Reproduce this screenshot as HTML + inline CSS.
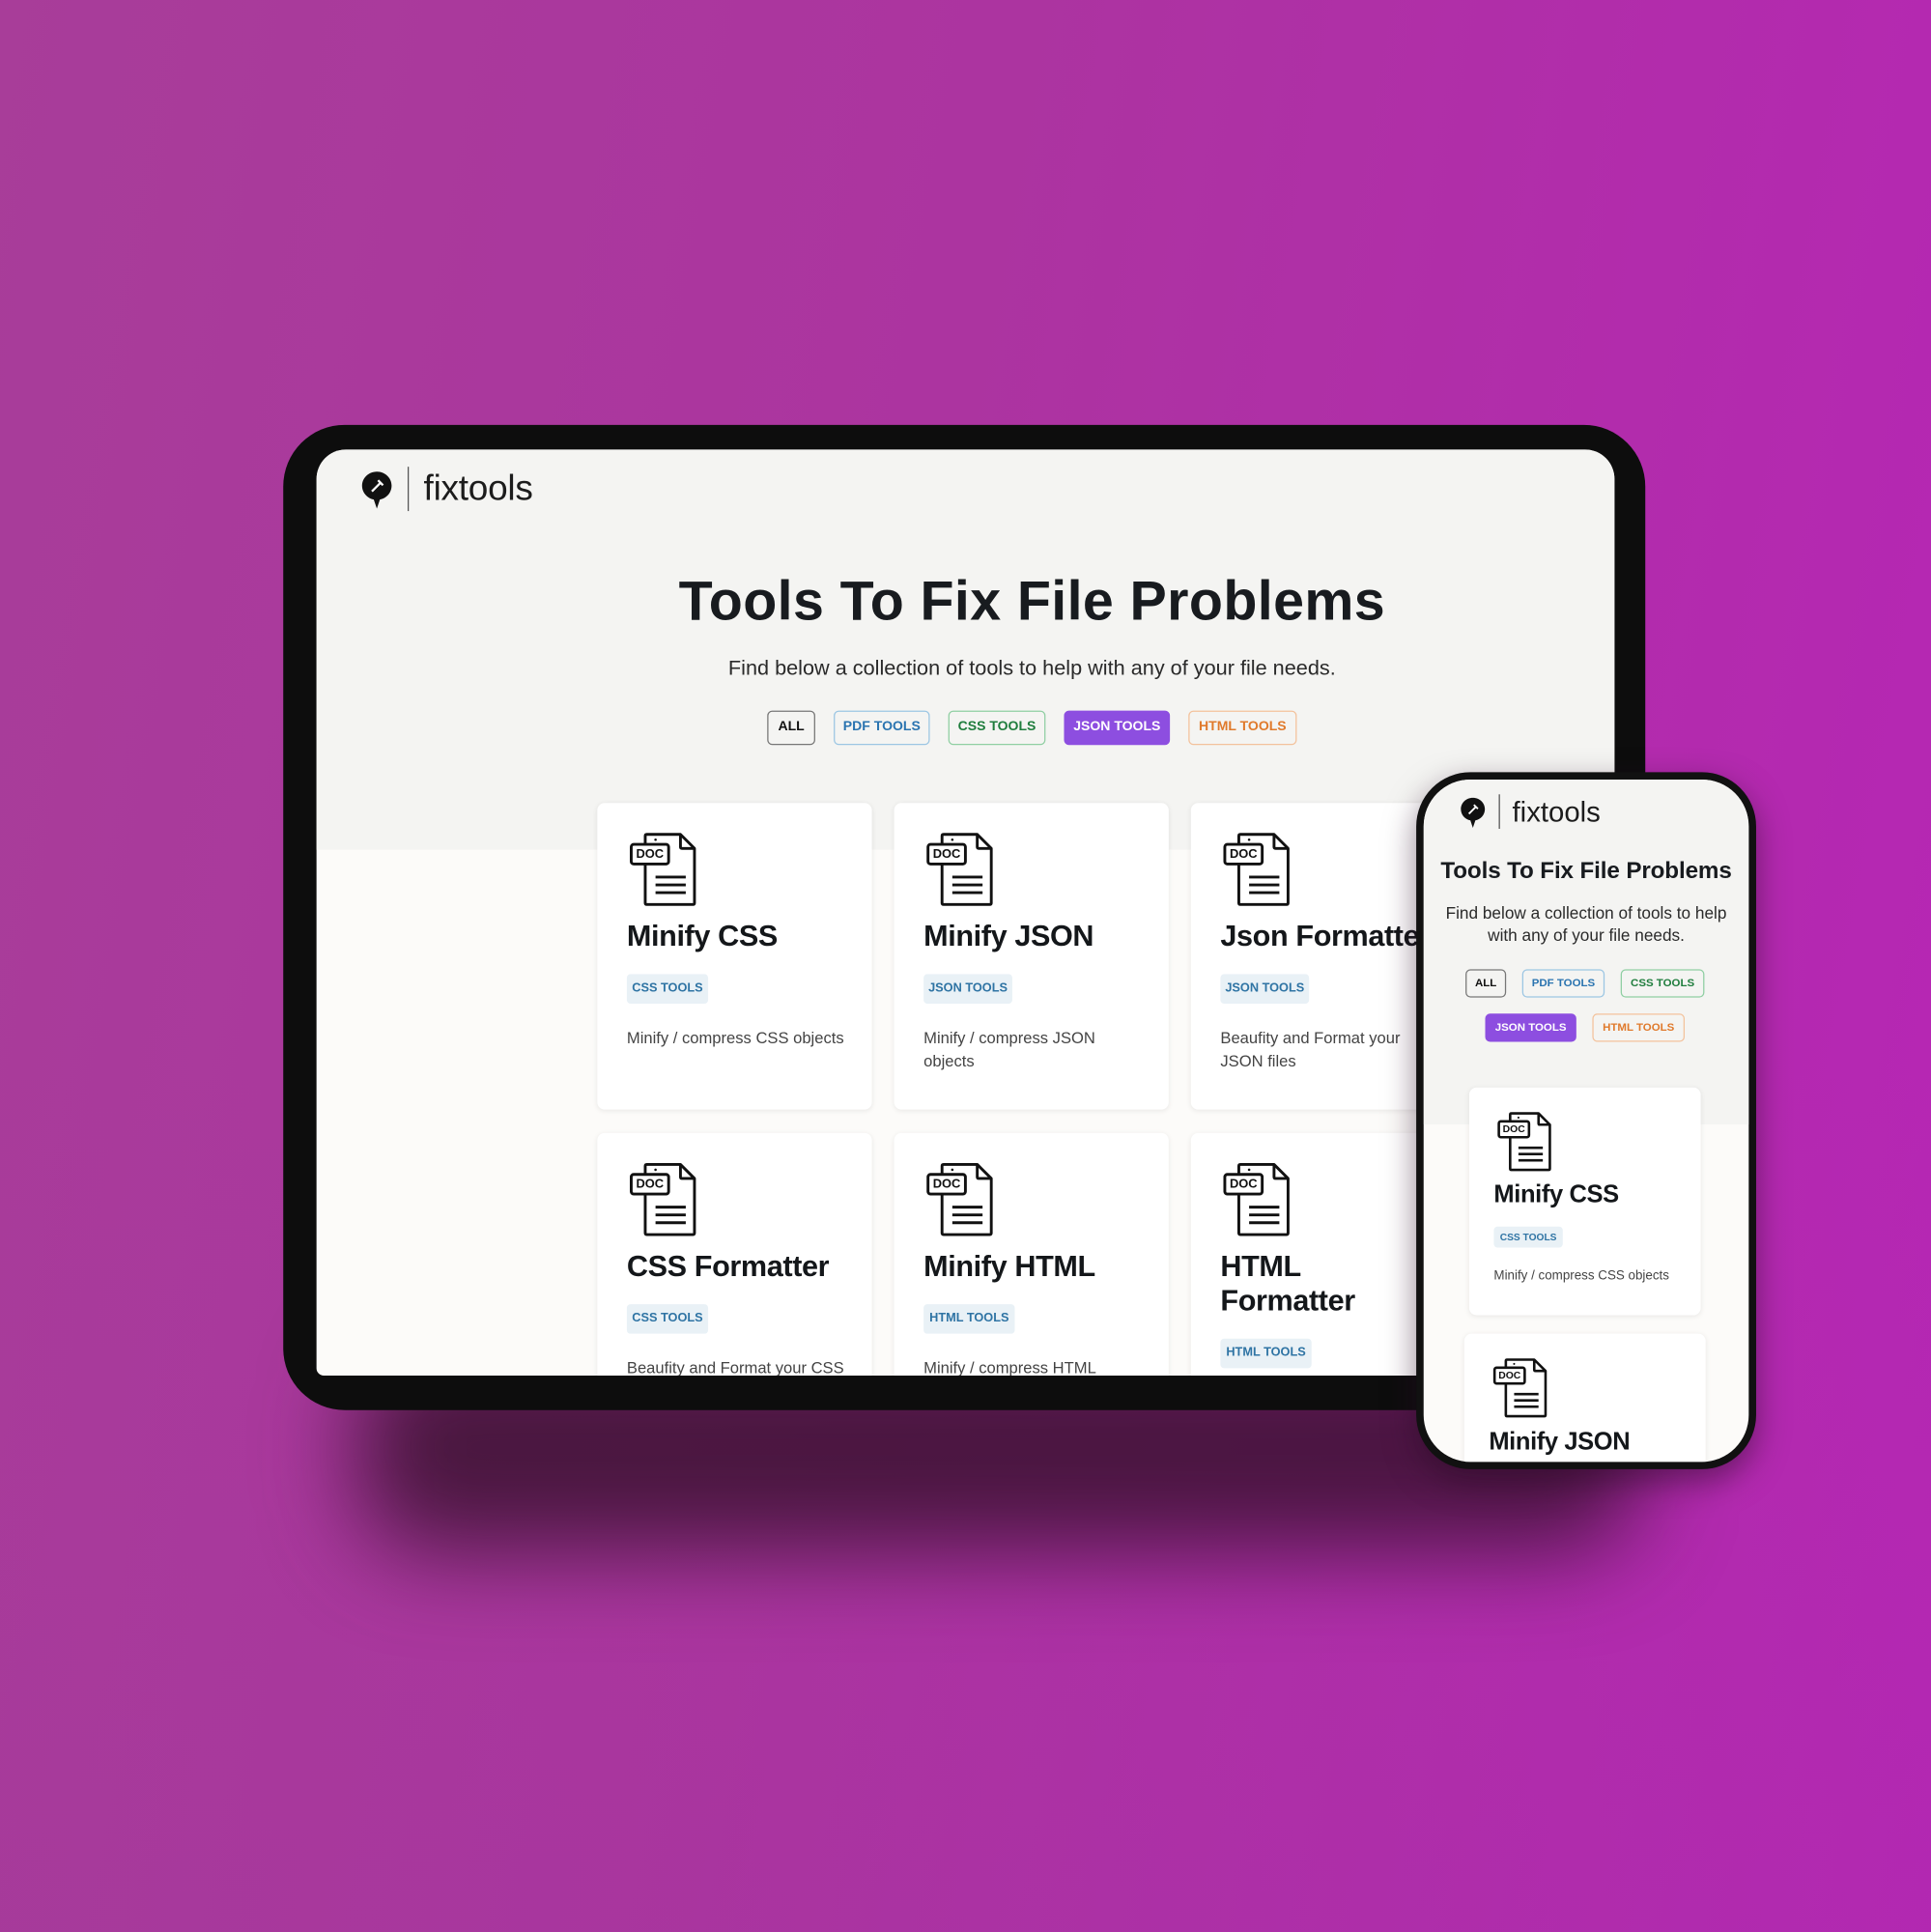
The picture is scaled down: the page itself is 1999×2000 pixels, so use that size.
<!DOCTYPE html>
<html><head><meta charset="utf-8"><style>
*{margin:0;padding:0;box-sizing:border-box}
html,body{width:1999px;height:2000px;overflow:hidden}
body{background:linear-gradient(100deg,#a83d99 0%,#ac34a0 45%,#b725b6 100%);font-family:"Liberation Sans",sans-serif;position:relative}
.bgb{position:absolute;left:0;top:0;width:1999px;height:2000px;background:linear-gradient(180deg,rgba(0,0,0,0) 55%,rgba(150,60,150,0.15) 100%)}
#st{position:absolute;left:0;top:0;width:1568px;height:1569px;transform:scale(1.27487);transform-origin:0 0}
.abs{position:absolute}
.shadow{position:absolute;left:290px;top:1090px;width:1040px;height:170px;background:rgba(50,15,40,0.8);filter:blur(38px);border-radius:60px}
.tab{left:230px;top:345px;width:1106px;height:800px;background:#0d0d0d;border-radius:50px}
.scr{left:257px;top:365px;width:1054px;height:752px;background:#fcfbf9;border-radius:24px 24px 0 6px;overflow:hidden}
.top{position:absolute;left:0;top:0;width:100%;height:325px;background:#f4f4f2}
.card{position:absolute;background:#fff;border-radius:6px;box-shadow:0 1px 4px rgba(0,0,0,0.08)}
.ct{position:absolute;font-weight:bold;color:#14171a;letter-spacing:-0.3px}
.tag{position:absolute;background:#e9f1f6;color:#2f74a4;font-weight:bold;border-radius:3px;text-align:center}
.desc{position:absolute;color:#444;line-height:1.45}
.btn{position:absolute;border-radius:4px;font-weight:bold;text-align:center;border:1.5px solid}
svg{position:absolute;overflow:visible}
</style></head><body><div class="bgb"></div>
<div id="st">
<div class="shadow"></div>
<div class="abs tab"></div>
<div class="abs scr">
 <div class="top"></div>
 <svg style="left:36px;top:17px" width="26" height="32" viewBox="0 0 26 32"><path d="M13 1C6.4 1 1 6 1 12.4c0 5.8 4.4 10.3 9.5 11.2L13 31l2.5-7.4C20.6 22.7 25 18.2 25 12.4 25 6 19.6 1 13 1z" fill="#111"/><path d="M9 17l7-7M14 8l4 4" stroke="#fff" stroke-width="1.8" fill="none"/></svg>
 <div class="abs" style="left:74px;top:14px;width:1px;height:36px;background:#555"></div>
 <div class="abs" style="left:87px;top:16px;font-size:29px;color:#1c1c1c;letter-spacing:-0.2px">fixtools</div>
 <div class="abs" style="left:0;width:1162px;text-align:center;top:97px;font-size:45px;font-weight:bold;color:#181b1f;letter-spacing:0.3px">Tools To Fix File Problems</div>
 <div class="abs" style="left:0;width:1162px;text-align:center;top:168px;font-size:17px;color:#2a2a2a">Find below a collection of tools to help with any of your file needs.</div>
 <div class="btn" style="left:366px;top:212px;width:39px;height:28px;line-height:25px;font-size:11px;color:#111;border-color:#777">ALL</div>
 <div class="btn" style="left:420px;top:212px;width:78px;height:28px;line-height:25px;font-size:11px;color:#2a74b0;border-color:#9cc6e3">PDF TOOLS</div>
 <div class="btn" style="left:513px;top:212px;width:79px;height:28px;line-height:25px;font-size:11px;color:#1f7d3d;border-color:#90cfa3">CSS TOOLS</div>
 <div class="btn" style="left:607px;top:212px;width:86px;height:28px;line-height:25px;font-size:11px;color:#fff;background:#8d4ee0;border-color:#8d4ee0">JSON TOOLS</div>
 <div class="btn" style="left:708px;top:212px;width:88px;height:28px;line-height:25px;font-size:11px;color:#e07a2c;border-color:#f3c29c">HTML TOOLS</div>
 <div class="card" style="left:228px;top:287px;width:223px;height:249px"></div>
 <div class="card" style="left:469px;top:287px;width:223px;height:249px"></div>
 <div class="card" style="left:710px;top:287px;width:223px;height:249px"></div>
 <div class="card" style="left:228px;top:555px;width:223px;height:249px"></div>
 <div class="card" style="left:469px;top:555px;width:223px;height:249px"></div>
 <div class="card" style="left:710px;top:555px;width:223px;height:249px"></div>
</div>
<div class="abs" style="left:257px;top:365px;width:1054px;height:752px;overflow:hidden">
 <svg style="left:253px;top:310px" width="57" height="62" viewBox="60 15 225 245"><g fill="none" stroke="#111" stroke-width="9" stroke-linejoin="round"><path d="M115 55V30q0-5 5-5h108l45 45v175q0 5-5 5H120q-5 0-5-5V120"/><path d="M228 25v40q0 5 5 5h40"/><rect x="70" y="57" width="120" height="63" rx="8"/><path d="M148 162h97M148 187h97M148 212h97"/></g><text x="130" y="100" text-anchor="middle" font-family="Liberation Sans" font-weight="bold" font-size="40" fill="#111">DOC</text><circle cx="148" cy="42" r="4" fill="#111"/></svg>
 <svg style="left:494px;top:310px" width="57" height="62" viewBox="60 15 225 245"><g fill="none" stroke="#111" stroke-width="9" stroke-linejoin="round"><path d="M115 55V30q0-5 5-5h108l45 45v175q0 5-5 5H120q-5 0-5-5V120"/><path d="M228 25v40q0 5 5 5h40"/><rect x="70" y="57" width="120" height="63" rx="8"/><path d="M148 162h97M148 187h97M148 212h97"/></g><text x="130" y="100" text-anchor="middle" font-family="Liberation Sans" font-weight="bold" font-size="40" fill="#111">DOC</text><circle cx="148" cy="42" r="4" fill="#111"/></svg>
 <svg style="left:735px;top:310px" width="57" height="62" viewBox="60 15 225 245"><g fill="none" stroke="#111" stroke-width="9" stroke-linejoin="round"><path d="M115 55V30q0-5 5-5h108l45 45v175q0 5-5 5H120q-5 0-5-5V120"/><path d="M228 25v40q0 5 5 5h40"/><rect x="70" y="57" width="120" height="63" rx="8"/><path d="M148 162h97M148 187h97M148 212h97"/></g><text x="130" y="100" text-anchor="middle" font-family="Liberation Sans" font-weight="bold" font-size="40" fill="#111">DOC</text><circle cx="148" cy="42" r="4" fill="#111"/></svg>
 <svg style="left:253px;top:578px" width="57" height="62" viewBox="60 15 225 245"><g fill="none" stroke="#111" stroke-width="9" stroke-linejoin="round"><path d="M115 55V30q0-5 5-5h108l45 45v175q0 5-5 5H120q-5 0-5-5V120"/><path d="M228 25v40q0 5 5 5h40"/><rect x="70" y="57" width="120" height="63" rx="8"/><path d="M148 162h97M148 187h97M148 212h97"/></g><text x="130" y="100" text-anchor="middle" font-family="Liberation Sans" font-weight="bold" font-size="40" fill="#111">DOC</text><circle cx="148" cy="42" r="4" fill="#111"/></svg>
 <svg style="left:494px;top:578px" width="57" height="62" viewBox="60 15 225 245"><g fill="none" stroke="#111" stroke-width="9" stroke-linejoin="round"><path d="M115 55V30q0-5 5-5h108l45 45v175q0 5-5 5H120q-5 0-5-5V120"/><path d="M228 25v40q0 5 5 5h40"/><rect x="70" y="57" width="120" height="63" rx="8"/><path d="M148 162h97M148 187h97M148 212h97"/></g><text x="130" y="100" text-anchor="middle" font-family="Liberation Sans" font-weight="bold" font-size="40" fill="#111">DOC</text><circle cx="148" cy="42" r="4" fill="#111"/></svg>
 <svg style="left:735px;top:578px" width="57" height="62" viewBox="60 15 225 245"><g fill="none" stroke="#111" stroke-width="9" stroke-linejoin="round"><path d="M115 55V30q0-5 5-5h108l45 45v175q0 5-5 5H120q-5 0-5-5V120"/><path d="M228 25v40q0 5 5 5h40"/><rect x="70" y="57" width="120" height="63" rx="8"/><path d="M148 162h97M148 187h97M148 212h97"/></g><text x="130" y="100" text-anchor="middle" font-family="Liberation Sans" font-weight="bold" font-size="40" fill="#111">DOC</text><circle cx="148" cy="42" r="4" fill="#111"/></svg>

 <div class="ct" style="left:252px;top:382px;font-size:24px">Minify CSS</div>
 <div class="ct" style="left:493px;top:382px;font-size:24px">Minify JSON</div>
 <div class="ct" style="left:734px;top:382px;font-size:24px;white-space:nowrap">Json Formatter</div>
 <div class="tag" style="left:252px;top:426px;width:66px;height:24px;line-height:24px;font-size:10px">CSS TOOLS</div>
 <div class="tag" style="left:493px;top:426px;width:72px;height:24px;line-height:24px;font-size:10px">JSON TOOLS</div>
 <div class="tag" style="left:734px;top:426px;width:72px;height:24px;line-height:24px;font-size:10px">JSON TOOLS</div>
 <div class="desc" style="left:252px;top:469px;font-size:13px;width:190px">Minify / compress CSS objects</div>
 <div class="desc" style="left:493px;top:469px;font-size:13px;width:160px">Minify / compress JSON objects</div>
 <div class="desc" style="left:734px;top:469px;font-size:13px;width:160px">Beaufity and Format your JSON files</div>

 <div class="ct" style="left:252px;top:650px;font-size:24px">CSS Formatter</div>
 <div class="ct" style="left:493px;top:650px;font-size:24px">Minify HTML</div>
 <div class="ct" style="left:734px;top:650px;font-size:24px;line-height:28px">HTML<br>Formatter</div>
 <div class="tag" style="left:252px;top:694px;width:66px;height:24px;line-height:24px;font-size:10px">CSS TOOLS</div>
 <div class="tag" style="left:493px;top:694px;width:74px;height:24px;line-height:24px;font-size:10px">HTML TOOLS</div>
 <div class="tag" style="left:734px;top:722px;width:74px;height:24px;line-height:24px;font-size:10px">HTML TOOLS</div>
 <div class="desc" style="left:252px;top:737px;font-size:13px;width:200px">Beaufity and Format your CSS</div>
 <div class="desc" style="left:493px;top:737px;font-size:13px;width:200px">Minify / compress HTML</div>
</div>

<div class="abs" style="left:1150px;top:627px;width:276px;height:566px;background:#111;border-radius:44px;box-shadow:0 10px 25px rgba(40,10,35,0.5)"></div>
<div class="abs" style="left:1156px;top:633px;width:264px;height:554px;background:#fcfbf9;border-radius:38px;overflow:hidden">
 <div class="abs" style="left:0;top:0;width:100%;height:280px;background:#f4f4f2"></div>
 <svg style="left:29px;top:14px" width="22" height="26" viewBox="0 0 26 32"><path d="M13 1C6.4 1 1 6 1 12.4c0 5.8 4.4 10.3 9.5 11.2L13 31l2.5-7.4C20.6 22.7 25 18.2 25 12.4 25 6 19.6 1 13 1z" fill="#111"/><path d="M9 17l7-7M14 8l4 4" stroke="#fff" stroke-width="1.8" fill="none"/></svg>
 <div class="abs" style="left:61px;top:12px;width:1px;height:28px;background:#555"></div>
 <div class="abs" style="left:72px;top:13px;font-size:23px;color:#1c1c1c">fixtools</div>
 <div class="abs" style="left:0;width:264px;text-align:center;top:64px;font-size:19px;font-weight:bold;color:#181b1f;letter-spacing:-0.1px">Tools To Fix File Problems</div>
 <div class="abs" style="left:0;width:264px;text-align:center;top:100px;font-size:13.5px;line-height:18px;color:#2a2a2a">Find below a collection of tools to help<br>with any of your file needs.</div>
 <div class="btn" style="left:34px;top:154px;width:33px;height:23px;line-height:20px;font-size:9px;color:#111;border-color:#777">ALL</div>
 <div class="btn" style="left:80px;top:154px;width:67px;height:23px;line-height:20px;font-size:9px;color:#2a74b0;border-color:#9cc6e3">PDF TOOLS</div>
 <div class="btn" style="left:160px;top:154px;width:68px;height:23px;line-height:20px;font-size:9px;color:#1f7d3d;border-color:#90cfa3">CSS TOOLS</div>
 <div class="btn" style="left:50px;top:190px;width:74px;height:23px;line-height:20px;font-size:9px;color:#fff;background:#8d4ee0;border-color:#8d4ee0">JSON TOOLS</div>
 <div class="btn" style="left:137px;top:190px;width:75px;height:23px;line-height:20px;font-size:9px;color:#e07a2c;border-color:#f3c29c">HTML TOOLS</div>
 <div class="card" style="left:37px;top:250px;width:188px;height:185px"></div>
 <div class="card" style="left:33px;top:450px;width:196px;height:150px"></div>
 <svg style="left:58px;top:269px" width="48" height="50" viewBox="60 15 225 245"><g fill="none" stroke="#111" stroke-width="10" stroke-linejoin="round"><path d="M115 55V30q0-5 5-5h108l45 45v175q0 5-5 5H120q-5 0-5-5V120"/><path d="M228 25v40q0 5 5 5h40"/><rect x="70" y="57" width="120" height="63" rx="8"/><path d="M148 162h97M148 187h97M148 212h97"/></g><text x="130" y="100" text-anchor="middle" font-family="Liberation Sans" font-weight="bold" font-size="40" fill="#111">DOC</text><circle cx="148" cy="42" r="4" fill="#111"/></svg>
 <svg style="left:54px;top:469px" width="49" height="50" viewBox="60 15 225 245"><g fill="none" stroke="#111" stroke-width="10" stroke-linejoin="round"><path d="M115 55V30q0-5 5-5h108l45 45v175q0 5-5 5H120q-5 0-5-5V120"/><path d="M228 25v40q0 5 5 5h40"/><rect x="70" y="57" width="120" height="63" rx="8"/><path d="M148 162h97M148 187h97M148 212h97"/></g><text x="130" y="100" text-anchor="middle" font-family="Liberation Sans" font-weight="bold" font-size="40" fill="#111">DOC</text><circle cx="148" cy="42" r="4" fill="#111"/></svg>
 <div class="ct" style="left:57px;top:326px;font-size:20px">Minify CSS</div>
 <div class="tag" style="left:57px;top:363px;width:56px;height:17px;line-height:17px;font-size:8px">CSS TOOLS</div>
 <div class="desc" style="left:57px;top:396px;font-size:10.5px">Minify / compress CSS objects</div>
 <div class="ct" style="left:53px;top:527px;font-size:20px">Minify JSON</div>
</div>
</div>
</body></html>
